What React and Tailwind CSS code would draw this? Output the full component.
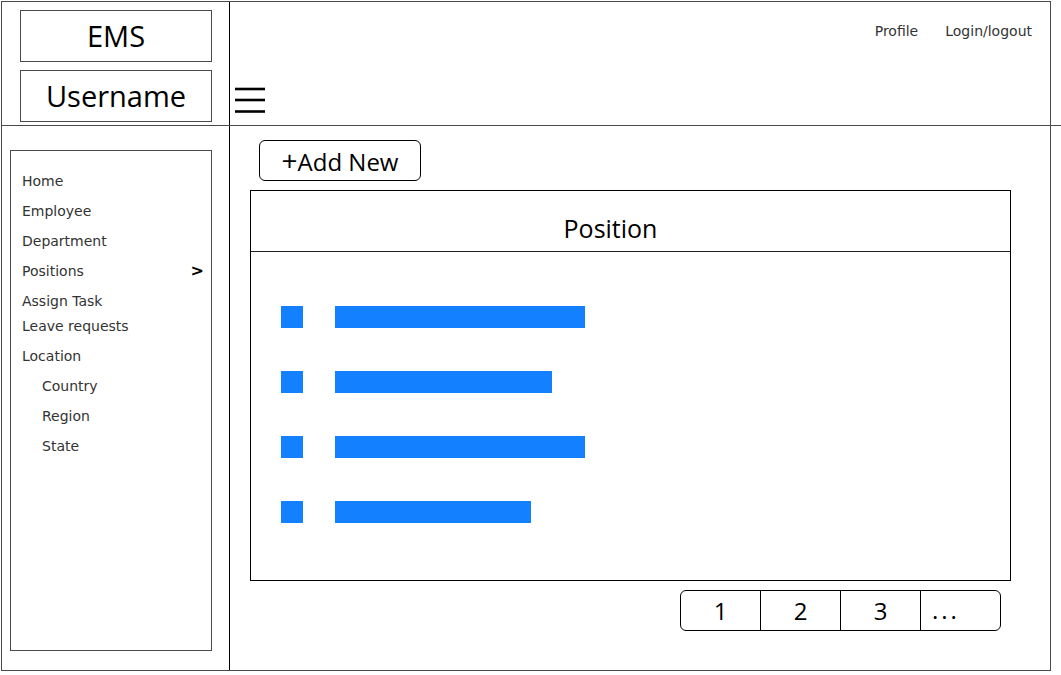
import React from "react";

const sketch = "border border-[#4a4a4a]";

function MenuItem({ label, indent, arrow, className = "" }) {
  return (
    <div className={`flex items-center justify-between h-[30px] ${indent ? "pl-[31px]" : "pl-[11px]"} pr-[7px] ${className}`}>
      <span className="text-[14px] text-[#333] font-['DejaVu_Sans',sans-serif]">{label}</span>
      {arrow && <span className="text-[16px] font-bold text-black leading-none font-['DejaVu_Sans',sans-serif]">&gt;</span>}
    </div>
  );
}

function Row({ width }) {
  return (
    <div className="flex items-center h-[22px]">
      <div className="w-[22px] h-[22px] bg-[#1380ff] blur-[0.4px]" />
      <div className="ml-[32px] h-[22px] bg-[#1380ff] blur-[0.4px]" style={{ width }} />
    </div>
  );
}

export default function App() {
  return (
    <div className="w-[1061px] h-[675px] bg-white overflow-hidden font-['Open_Sans',sans-serif] text-black">
      <div className={`ml-px mt-px w-[1050px] h-[670px] ${sketch} flex flex-col`}>
        {/* Header */}
        <div className="flex h-[124px] shrink-0 border-b border-[#4a4a4a] mr-[-12px]">
          <div className="w-[228px] shrink-0 border-r border-black pl-[18px] pt-[8px] flex flex-col gap-[8px]">
            <div className={`w-[192px] h-[52px] ${sketch} flex items-center justify-center text-[29px] leading-none pb-[2px]`}>EMS</div>
            <div className={`w-[192px] h-[52px] ${sketch} flex items-center justify-center text-[29px] leading-none pb-[2px]`}>Username</div>
          </div>
          <div className="flex-1 flex flex-col">
            <div className="flex justify-end gap-[27px] pr-[30px] pt-[19px] text-[14px] leading-[20px] text-[#333] font-['DejaVu_Sans',sans-serif]">
              <span>Profile</span>
              <span>Login/logout</span>
            </div>
            <div className="pl-[5px] mt-[45px]">
              <svg width="31" height="28" viewBox="0 0 31 28">
                <line x1="0" y1="3" x2="30" y2="3" stroke="black" strokeWidth="2.6" />
                <line x1="0" y1="14" x2="30" y2="14" stroke="black" strokeWidth="2.6" />
                <line x1="0" y1="25.5" x2="30" y2="25.5" stroke="black" strokeWidth="2.6" />
              </svg>
            </div>
          </div>
        </div>
        {/* Body */}
        <div className="flex flex-1">
          <div className="w-[228px] shrink-0 border-r border-black pl-[8px] pt-[24px]">
            <div className={`w-[202px] h-[501px] ${sketch} pt-[15px]`}>
              <MenuItem label="Home" />
              <MenuItem label="Employee" />
              <MenuItem label="Department" />
              <MenuItem label="Positions" arrow />
              <MenuItem label="Assign Task" />
              <MenuItem label="Leave requests" className="-mt-[5px]" />
              <MenuItem label="Location" />
              <MenuItem label="Country" indent />
              <MenuItem label="Region" indent />
              <MenuItem label="State" indent />
            </div>
          </div>
          <div className="flex-1 pl-[20px] pt-[14px] flex flex-col">
            <button className="ml-[9px] w-[162px] h-[41px] border border-black rounded-[6px] flex items-center justify-center leading-none pt-[3px]">
              <span className="text-[28px] font-medium relative -top-[2px]">+</span>
              <span className="text-[24px]">Add New</span>
            </button>
            <div className="mt-[9px] w-[761px] h-[391px] border border-black flex flex-col">
              <div className="h-[61px] shrink-0 border-b border-[#222] flex justify-center pt-[21px] pr-[40px]">
                <span className="text-[25px] leading-[32px]">Position</span>
              </div>
              <div className="pl-[30px] pt-[54px] flex flex-col gap-[43px]">
                <Row width={250} />
                <Row width={217} />
                <Row width={250} />
                <Row width={196} />
              </div>
            </div>
            <div className="mt-[9px] ml-[430px] w-[321px] h-[41px] border border-black rounded-[6px] flex text-[24px]">
              <div className="w-[80px] border-r border-black flex items-center justify-center">1</div>
              <div className="w-[80px] border-r border-black flex items-center justify-center">2</div>
              <div className="w-[80px] border-r border-black flex items-center justify-center">3</div>
              <div className="flex-1 flex items-center pl-[11px] tracking-[3px] -mt-[2px]">...</div>
            </div>
          </div>
        </div>
      </div>
    </div>
  );
}
